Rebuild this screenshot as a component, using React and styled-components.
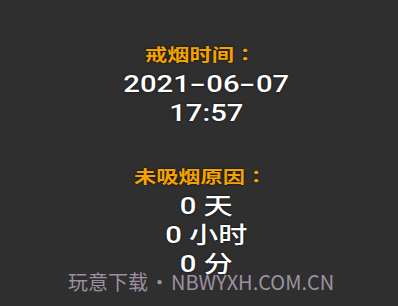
import styled, { createGlobalStyle } from "styled-components";

const GlobalStyle = createGlobalStyle`
  html, body {
    margin: 0;
    padding: 0;
    background-color: #2f2f2f;
  }
`;

const Page = styled.div`
  position: relative;
  width: 398px;
  height: 306px;
  overflow: hidden;
  background-color: #2f2f2f;
  display: flex;
  flex-direction: column;
  align-items: center;
  padding: 42px 0 0 14px;
  box-sizing: border-box;
  font-family: Roboto, "Noto Sans CJK SC", sans-serif;
`;

const Column = styled.div`
  display: flex;
  flex-direction: column;
  align-items: center;
  transform: scaleX(1.27);
`;

const Section = styled.div`
  display: flex;
  flex-direction: column;
  align-items: center;
  margin-bottom: ${(props) => props.gap || 0}px;
`;

const Label = styled.div`
  color: #f5a200;
  font-size: 17.5px;
  font-weight: bold;
  line-height: 24px;
  margin: 0 9px 4px 0;
  font-family: "Noto Sans CJK TC", sans-serif;
  text-shadow: 0 0 2px rgba(0, 0, 0, 0.9);
`;

const Value = styled.div`
  color: #ffffff;
  font-size: 23px;
  font-weight: 500;
  line-height: 29px;
  text-shadow: 0 0 2px rgba(0, 0, 0, 0.9);
  white-space: nowrap;
`;

const Dash = styled.span`
  display: inline-block;
  width: 13px;
  text-align: center;
  transform: scaleX(1.6);
`;

const Watermark = styled.div`
  position: absolute;
  left: 68px;
  top: 270px;
  color: #9d90a2;
  font-family: "Noto Sans CJK SC", sans-serif;
  font-size: 20px;
  line-height: 24px;
  word-spacing: -3px;
  white-space: nowrap;
`;

function App() {
  return (
    <>
      <GlobalStyle />
      <Page>
        <Column>
          <Section gap={36}>
            <Label>戒烟时间：</Label>
            <Value>2021<Dash>-</Dash>06<Dash>-</Dash>07</Value>
            <Value>17:57</Value>
          </Section>
          <Section>
            <Label>未吸烟原因：</Label>
            <Value>0 天</Value>
            <Value>0 小时</Value>
            <Value>0 分</Value>
          </Section>
        </Column>
        <Watermark>玩意下载 • NBWYXH.COM.CN</Watermark>
      </Page>
    </>
  );
}

export default App;
